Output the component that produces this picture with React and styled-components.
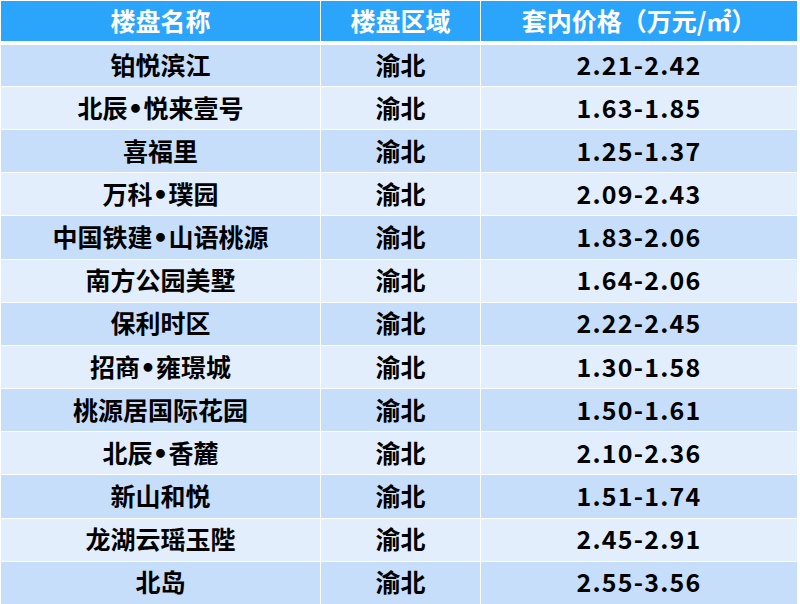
import React from 'react'
import styled, { createGlobalStyle } from 'styled-components'

const GlobalStyle = createGlobalStyle`
    html, body {
        margin: 0;
        padding: 0;
        background: #ffffff;
    }
    body {
        font-family: "Noto Sans CJK SC", "Noto Sans", sans-serif;
    }
`

const Table = styled.div`
    display: flex;
    flex-direction: column;
    row-gap: 1px;
    width: 800px;
    height: 604px;
    padding: 1px 0 0 1px;
    box-sizing: border-box;
    overflow: hidden;
    background: #ffffff;
`
const Row = styled.div`
    display: grid;
    grid-template-columns: 319px 159px 316px;
    column-gap: 1px;
    height: ${props => props.$height}px;
    margin-bottom: ${props => props.$head ? 3 : 0}px;
    flex-shrink: 0;
`
const Cell = styled.div`
    display: flex;
    align-items: center;
    justify-content: center;
    padding-bottom: 2px;
    box-sizing: border-box;
    background: ${props => props.$bg};
    color: ${props => props.$head ? '#ffffff' : '#000000'};
    font-size: 25px;
    font-weight: 700;
    line-height: 1;
    white-space: nowrap;
`
// the CJK font draws a full-width bullet, the reference has a narrow one
const Bullet = styled.span`
    font-family: "DejaVu Sans", sans-serif;
    line-height: 0;
`
const Price = styled.span`
    letter-spacing: ${props => props.$spacing}px;
`

const HEAD_BG = '#2ba5fb'
const ODD_BG = '#c6defa'
const EVEN_BG = '#e3eefc'

const projects = [
    ['铂悦滨江', '渝北', '2.21-2.42'],
    ['北辰•悦来壹号', '渝北', '1.63-1.85'],
    ['喜福里', '渝北', '1.25-1.37'],
    ['万科•璞园', '渝北', '2.09-2.43'],
    ['中国铁建•山语桃源', '渝北', '1.83-2.06'],
    ['南方公园美墅', '渝北', '1.64-2.06'],
    ['保利时区', '渝北', '2.22-2.45'],
    ['招商•雍璟城', '渝北', '1.30-1.58'],
    ['桃源居国际花园', '渝北', '1.50-1.61'],
    ['北辰•香麓', '渝北', '2.10-2.36'],
    ['新山和悦', '渝北', '1.51-1.74'],
    ['龙湖云瑶玉陛', '渝北', '2.45-2.91'],
    ['北岛', '渝北', '2.55-3.56'],
]

const Name = ({ text }) => {
    const parts = text.split('•')
    return (
        <span>
            {parts.map((part, i) => (
                <React.Fragment key={i}>
                    {i > 0 && <Bullet>•</Bullet>}
                    {part}
                </React.Fragment>
            ))}
        </span>
    )
}

const App = () => {
    return (
        <>
            <GlobalStyle />
            <Table>
                <Row $head $height={40}>
                    <Cell $head $bg={HEAD_BG}>楼盘名称</Cell>
                    <Cell $head $bg={HEAD_BG}>楼盘区域</Cell>
                    <Cell $head $bg={HEAD_BG}>套内价格（万元/㎡）</Cell>
                </Row>
                {projects.map(([name, area, price], i) => (
                    <Row key={name} $height={i === 0 ? 41 : 42.17}>
                        <Cell $bg={i % 2 ? EVEN_BG : ODD_BG}>
                            <Name text={name} />
                        </Cell>
                        <Cell $bg={i % 2 ? EVEN_BG : ODD_BG}>{area}</Cell>
                        <Cell $bg={i % 2 ? EVEN_BG : ODD_BG}>
                            <Price $spacing={1.2}>{price}</Price>
                        </Cell>
                    </Row>
                ))}
            </Table>
        </>
    )
}

export default App
